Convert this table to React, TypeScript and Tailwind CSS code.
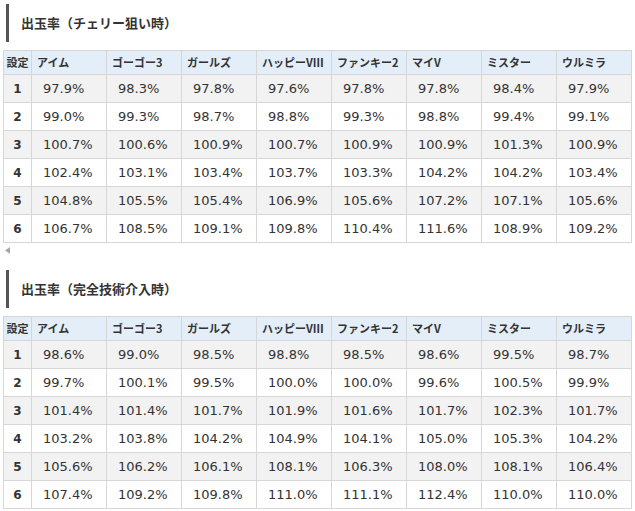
const heads = ['アイム', 'ゴーゴー3', 'ガールズ', 'ハッピーVⅢ', 'ファンキー2', 'マイV', 'ミスター', 'ウルミラ'];

const cherry = [
  ['97.9%', '98.3%', '97.8%', '97.6%', '97.8%', '97.8%', '98.4%', '97.9%'],
  ['99.0%', '99.3%', '98.7%', '98.8%', '99.3%', '98.8%', '99.4%', '99.1%'],
  ['100.7%', '100.6%', '100.9%', '100.7%', '100.9%', '100.9%', '101.3%', '100.9%'],
  ['102.4%', '103.1%', '103.4%', '103.7%', '103.3%', '104.2%', '104.2%', '103.4%'],
  ['104.8%', '105.5%', '105.4%', '106.9%', '105.6%', '107.2%', '107.1%', '105.6%'],
  ['106.7%', '108.5%', '109.1%', '109.8%', '110.4%', '111.6%', '108.9%', '109.2%'],
];

const full = [
  ['98.6%', '99.0%', '98.5%', '98.8%', '98.5%', '98.6%', '99.5%', '98.7%'],
  ['99.7%', '100.1%', '99.5%', '100.0%', '100.0%', '99.6%', '100.5%', '99.9%'],
  ['101.4%', '101.4%', '101.7%', '101.9%', '101.6%', '101.7%', '102.3%', '101.7%'],
  ['103.2%', '103.8%', '104.2%', '104.9%', '104.1%', '105.0%', '105.3%', '104.2%'],
  ['105.6%', '106.2%', '106.1%', '108.1%', '106.3%', '108.0%', '108.1%', '106.4%'],
  ['107.4%', '109.2%', '109.8%', '111.0%', '111.1%', '112.4%', '110.0%', '110.0%'],
];

const jp = { fontFamily: '"Noto Sans CJK JP", "Noto Sans", sans-serif' };
const num = { fontFamily: '"DejaVu Sans", Verdana, sans-serif' };

const Title = ({ text }: { text: string }) => (
  <div className="ml-[6px] flex h-[38px] items-center border-l-[3px] border-[#555] pl-[12px]">
    <h3 className="text-[13px] font-bold text-[#333]" style={jp}>
      {text}
    </h3>
  </div>
);

const RateTable = ({ rows }: { rows: string[][] }) => (
  <div className="ml-[3px] grid w-max grid-cols-[28px_repeat(8,75px)] border-l border-t border-[#d6d6d6] text-[#333]">
    <div className="flex h-[24px] items-center justify-center border-b border-r border-[#d6d6d6] bg-[#e3eef8] text-[11px] font-bold" style={jp}>
      設定
    </div>
    {heads.map((h) => (
      <div key={h} className="flex h-[24px] items-center border-b border-r border-[#d6d6d6] bg-[#e3eef8] pl-[5px] text-[11px] font-bold" style={jp}>
        {h}
      </div>
    ))}
    {rows.map((r, i) => {
      const bg = i % 2 === 0 ? 'bg-[#f2f2f2]' : 'bg-white';
      return [
        <div key={`n${i}`} className={`flex h-[28px] items-center justify-center border-b border-r border-[#d6d6d6] text-[12px] font-bold ${bg}`} style={num}>
          {i + 1}
        </div>,
        ...r.map((v, j) => (
          <div key={`${i}-${j}`} className={`flex h-[28px] items-center border-b border-r border-[#d6d6d6] pl-[11px] text-[13px] ${bg}`} style={num}>
            {v}
          </div>
        )),
      ];
    })}
  </div>
);

export default function App() {
  return (
    <div className="min-h-[511px] w-[635px] bg-white pt-[4px]">
      <Title text="出玉率（チェリー狙い時）" />
      <div className="mt-[8px]">
        <RateTable rows={cherry} />
      </div>
      <div className="flex h-[14px] items-center pl-[5px]">
        <svg width="5" height="7" viewBox="0 0 5 7">
          <path d="M5 0 L0 3.5 L5 7 Z" fill="#a8a8a8" />
        </svg>
      </div>
      <div className="mt-[13px]">
        <Title text="出玉率（完全技術介入時）" />
      </div>
      <div className="mt-[8px]">
        <RateTable rows={full} />
      </div>
    </div>
  );
}
